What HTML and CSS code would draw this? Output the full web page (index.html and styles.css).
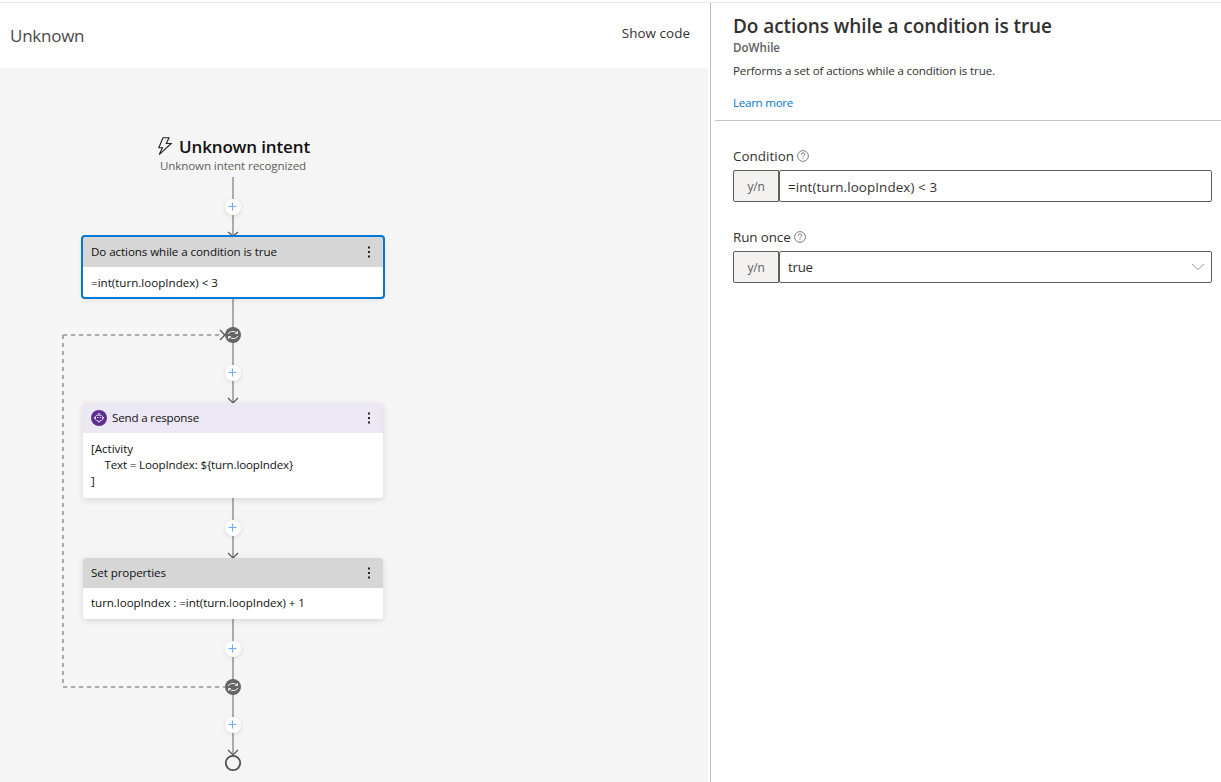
FILE: index.html
```html
<!DOCTYPE html>
<html lang="en">
<head>
<meta charset="utf-8">
<title>Unknown</title>
<link rel="stylesheet" href="styles.css">
</head>
<body>
<svg class="defs" width="0" height="0">
  <symbol id="plus" viewBox="0 0 18 18"><circle cx="9" cy="9" r="8" fill="#fff"/><path d="M8.500 4.500v8M4.500 8.500h8" stroke="#6fa8f5" fill="none"/></symbol>
  <symbol id="loop" viewBox="0 0 16 16"><circle cx="8" cy="8" r="8" fill="#656565"/><path d="M3.200 7C4 5.200 5.700 4.500 8 4.500c1.700 0 3 .5 4 1.500M12.500 4.200v2.300H10.200M12.800 9c-.8 1.800-2.500 2.500-4.800 2.500-1.700 0-3-.5-4-1.500M3.500 11.800V9.500H5.800" stroke="#f2f2f2" stroke-width="1" fill="none"/></symbol>
  <symbol id="dots" viewBox="0 0 4 14"><path d="M1 1.500h2v2H1zM1 6h2v2H1zM1 10.500h2v2H1z" fill="#222"/></symbol>
  <symbol id="help" viewBox="0 0 12 12"><circle cx="6" cy="6" r="5.400" stroke="#605e5c" stroke-width=".8" fill="none"/><path d="M4.300 4.700C4.300 3.600 5 3 6 3s1.700.6 1.700 1.500C7.700 5.700 6 5.700 6 7.200M6 8.100v1" stroke="#605e5c" stroke-width=".9" fill="none"/></symbol>
</svg>
<div class="app">
  <main class="editor">
    <header class="bar"><span class="crumb">Unknown</span><span class="show-code">Show code</span></header>
    <div class="canvas">
      <svg class="edges" width="708" height="714" viewBox="0 68 708 714" fill="none">
        <g stroke="#ababab" stroke-width="2">
          <path d="M233 177V236M233 298V403M233 498V558M233 619V755"/>
          <path d="M225 687H63" stroke-dasharray="4 4" stroke-dashoffset="2"/>
          <path d="M63 683V334" stroke-dasharray="4 4"/>
          <path d="M63 335H225" stroke-dasharray="4 4"/>
        </g>
        <path d="M228 232l5 4 5-4M228 398l5 5 5-5M228 553l5 5 5-5M228 750l5 5 5-5M220 330l5 5-5 5" stroke="#555" stroke-width="1.200"/>
        <circle cx="233" cy="763" r="7.200" stroke="#505050" stroke-width="1.800"/>
      </svg>
      <div class="trigger">
        <div class="trigger-head"><svg width="16" height="19" viewBox="0 0 16 19"><path d="M6 .8H12L9.300 6.500H14.200L2.200 17.600 5.500 10.800H1.800z" stroke="#222" stroke-width="1.100" fill="none"/></svg><h2>Unknown intent</h2></div>
        <span class="trigger-sub">Unknown intent recognized</span>
      </div>
      <svg class="add a1"><use href="#plus"/></svg>
      <section class="card c1">
        <div class="card-head"><span class="t1">Do actions while a condition is true</span><svg class="dots"><use href="#dots"/></svg></div>
        <div class="card-body"><span class="t2">=int(turn.loopIndex) &lt; 3</span></div>
      </section>
      <svg class="loop l1"><use href="#loop"/></svg>
      <svg class="add a2"><use href="#plus"/></svg>
      <section class="card c2">
        <div class="card-head"><svg class="bot" viewBox="0 0 16 16"><circle cx="8" cy="8" r="8" fill="#5c2e91"/><path d="M5.700 5.200h4.600l1.200 1.200v3L10.300 10.700H9L8 12.400 7 10.700H5.700L4.500 9.400v-3zM8 5V3.800M3.500 7v1.700M12.500 7v1.700" stroke="#eee6f8" stroke-width=".9" fill="none"/><path d="M6.200 7h1v1h-1zM8.800 7h1v1h-1zM7.400 3h1.200v1H7.400z" fill="#fff"/></svg><span class="t3">Send a response</span><svg class="dots"><use href="#dots"/></svg></div>
        <div class="card-body lines"><span class="t4">[Activity</span><span class="t5">Text = LoopIndex: ${turn.loopIndex}</span><span>]</span></div>
      </section>
      <svg class="add a3"><use href="#plus"/></svg>
      <section class="card c3">
        <div class="card-head"><span class="t6">Set properties</span><svg class="dots"><use href="#dots"/></svg></div>
        <div class="card-body"><span class="t7">turn.loopIndex : =int(turn.loopIndex) + 1</span></div>
      </section>
      <svg class="add a4"><use href="#plus"/></svg>
      <svg class="loop l2"><use href="#loop"/></svg>
      <svg class="add a5"><use href="#plus"/></svg>
    </div>
  </main>
  <aside class="panel">
    <header class="intro">
      <h1>Do actions while a condition is true</h1>
      <div class="kind">DoWhile</div>
      <p>Performs a set of actions while a condition is true.</p>
      <a>Learn more</a>
    </header>
    <div class="form">
      <div class="label"><span class="f1">Condition</span><svg><use href="#help"/></svg></div>
      <div class="field"><div class="type">y/n</div><div class="value"><span class="v1">=int(turn.loopIndex) &lt; 3</span></div></div>
      <div class="label second"><span class="f2">Run once</span><svg><use href="#help"/></svg></div>
      <div class="field"><div class="type">y/n</div><div class="value select"><span class="v2">true</span><svg width="14" height="8" viewBox="0 0 14 8"><path d="M1 1l6 5.500L13 1" stroke="#999" fill="none"/></svg></div></div>
    </div>
  </aside>
</div>
</body>
</html>
```

FILE: styles.css
```css
* { box-sizing: border-box; }
body { margin: 0; background: #fff; color: #323130; font-family: "Open Sans", "Noto Sans", sans-serif; font-size: 11.600px; }
h1, h2, p { margin: 0; font-weight: 600; }
svg { flex: none; display: block; }
.defs { position: absolute; }
.app { display: flex; height: 782px; padding-top: 2px; position: relative; }
.app::before { content: ""; position: absolute; left: 0; right: 0; top: 2px; height: 1px; background: #e8e8e8; }
.editor { width: 710px; display: flex; flex-direction: column; }
.bar { height: 66px; display: flex; justify-content: space-between; padding: 0 20px 0 10px; align-items: center; }
.crumb { font-size: 17px; color: #4a4a4a; letter-spacing: -.25px; }
.show-code { font-size: 13.400px; padding-bottom: 4px; letter-spacing: .06px; }
.canvas { position: relative; width: 708px; height: 714px; background: #f5f5f5; color: #111; overflow: hidden; }
.edges { position: absolute; left: 0; top: 0; }
.trigger { position: absolute; left: 133px; top: 67px; width: 200px; display: flex; flex-direction: column; align-items: center; }
.trigger-head { display: flex; align-items: center; gap: 6px; height: 23px; padding-left: 1px; }
h2 { font-size: 17px; white-space: nowrap; letter-spacing: -.143px; }
.trigger-sub { line-height: 16px; color: #605e5c; letter-spacing: -.11px; }
.add { position: absolute; left: 224px; width: 18px; height: 18px; filter: drop-shadow(0 1px 2px rgba(0,0,0,.12)); }
.a1 { top: 130px; }
.a2 { top: 296px; }
.a3 { top: 451px; }
.a4 { top: 572px; }
.a5 { top: 648px; }
.loop { position: absolute; left: 225px; width: 16px; height: 16px; }
.l1 { top: 259px; }
.l2 { top: 611px; }
.card { position: absolute; left: 83px; width: 300px; background: #fff; border-radius: 2px; box-shadow: 0 2px 6px rgba(0,0,0,.12); }
.card-head { height: 30px; padding: 0 12px 0 8px; display: flex; align-items: center; background: #d6d6d6; border-radius: 2px 2px 0 0; }
.card-head span { padding-bottom: 2px; }
.dots { width: 4px; height: 14px; margin-left: auto; }
.card-body { padding: 7px 8px; line-height: 16px; height: 31px; }
.c1 { top: 169px; outline: 2px solid #0078d4; }
.c1 .card-body { height: 60px; height: 30px; padding-top: 8px; }
.c2 { top: 335px; }
.c3 { top: 490px; }
.c2 .card-head { background: #ece8f3; }
.bot { width: 16px; height: 16px; margin-right: 5px; }
.card .lines { height: 65px; display: flex; flex-direction: column; padding-top: 8px; align-items: flex-start; }
.t1 { letter-spacing: -.079px; }
.t2 { letter-spacing: -.002px; }
.t3 { letter-spacing: -.17px; }
.t4 { letter-spacing: -.046px; }
.t5 { margin-left: 13.500px; letter-spacing: -.166px; }
.t6 { letter-spacing: -.092px; }
.t7 { letter-spacing: -.056px; }
.panel { flex: 1; border-left: 1px solid #b8b8b8; padding-left: 4px; margin-top: 1px; }
.intro { height: 118px; padding: 9px 0 0 18px; border-bottom: 1px solid #c8c6c4; }
h1 { font-size: 19px; line-height: 28px; letter-spacing: -.068px; }
.kind { font-weight: 600; line-height: 16px; color: #605e5c; }
.intro p { font-weight: 400; line-height: 16px; margin-top: 7px; letter-spacing: -.136px; }
.intro a { display: block; line-height: 16px; margin-top: 16px; color: #0078d4; letter-spacing: -.28px; }
.form { padding: 25px 9px 0 18px; }
.label { display: flex; align-items: center; gap: 3px; height: 20px; font-size: 13.400px; }
.label svg { width: 12px; height: 12px; }
.f1 { letter-spacing: .04px; }
.f2 { letter-spacing: -.1px; }
.second { margin-top: 25px; }
.field { display: flex; height: 32px; margin-top: 4px; font-size: 13.400px; }
.type { width: 46px; border: 1px solid #605e5c; border-radius: 2px 0 0 2px; background: #f3f2f1; display: grid; place-items: center; color: #605e5c; font-size: 12px; letter-spacing: -.2px; }
.value { flex: 1; border: 1px solid #605e5c; border-radius: 2px; display: flex; align-items: center; padding: 0 6px 0 8px; }
.v1 { padding-top: 2px; letter-spacing: .1px; }
.v2 { letter-spacing: -.3px; }
.select { justify-content: space-between; }
```
